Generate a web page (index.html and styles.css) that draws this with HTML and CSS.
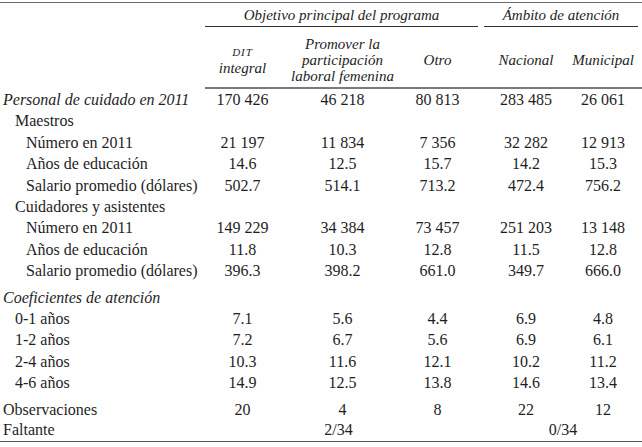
FILE: index.html
```html
<!DOCTYPE html>
<html>
<head>
<meta charset="utf-8">
<link rel="stylesheet" href="styles.css">
</head>
<body>
<table class="tbl">
  <colgroup>
    <col class="c-label"><col class="c-dit"><col class="c-prom"><col class="c-otro"><col class="c-nac"><col class="c-mun">
  </colgroup>
  <thead>
    <tr class="h1">
      <th rowspan="2"></th>
      <th colspan="3"><div class="grp grp-obj">Objetivo principal del programa</div></th>
      <th colspan="2"><div class="grp grp-amb">Ámbito de atención</div></th>
    </tr>
    <tr class="h2">
      <th class="n dit"><span class="sc">DIT</span><br>integral</th>
      <th class="n prom">Promover la<br>participación<br>laboral femenina</th>
      <th class="n otro">Otro</th>
      <th class="n nac">Nacional</th>
      <th class="n mun">Municipal</th>
    </tr>
  </thead>
  <tbody>
    <tr><td class="l0 it">Personal de cuidado en 2011</td><td class="n dit">170 426</td><td class="n prom">46 218</td><td class="n otro">80 813</td><td class="n nac">283 485</td><td class="n mun">26 061</td></tr>
    <tr><td class="l1">Maestros</td><td></td><td></td><td></td><td></td><td></td></tr>
    <tr><td class="l2">Número en 2011</td><td class="n dit">21 197</td><td class="n prom">11 834</td><td class="n otro">7 356</td><td class="n nac">32 282</td><td class="n mun">12 913</td></tr>
    <tr><td class="l2">Años de educación</td><td class="n dit">14.6</td><td class="n prom">12.5</td><td class="n otro">15.7</td><td class="n nac">14.2</td><td class="n mun">15.3</td></tr>
    <tr><td class="l2">Salario promedio (dólares)</td><td class="n dit">502.7</td><td class="n prom">514.1</td><td class="n otro">713.2</td><td class="n nac">472.4</td><td class="n mun">756.2</td></tr>
    <tr><td class="l1">Cuidadores y asistentes</td><td></td><td></td><td></td><td></td><td></td></tr>
    <tr><td class="l2">Número en 2011</td><td class="n dit">149 229</td><td class="n prom">34 384</td><td class="n otro">73 457</td><td class="n nac">251 203</td><td class="n mun">13 148</td></tr>
    <tr><td class="l2">Años de educación</td><td class="n dit">11.8</td><td class="n prom">10.3</td><td class="n otro">12.8</td><td class="n nac">11.5</td><td class="n mun">12.8</td></tr>
    <tr><td class="l2">Salario promedio (dólares)</td><td class="n dit">396.3</td><td class="n prom">398.2</td><td class="n otro">661.0</td><td class="n nac">349.7</td><td class="n mun">666.0</td></tr>
    <tr class="gap"><td class="l0 it">Coeficientes de atención</td><td></td><td></td><td></td><td></td><td></td></tr>
    <tr><td class="l1">0-1 años</td><td class="n dit">7.1</td><td class="n prom">5.6</td><td class="n otro">4.4</td><td class="n nac">6.9</td><td class="n mun">4.8</td></tr>
    <tr><td class="l1">1-2 años</td><td class="n dit">7.2</td><td class="n prom">6.7</td><td class="n otro">5.6</td><td class="n nac">6.9</td><td class="n mun">6.1</td></tr>
    <tr><td class="l1">2-4 años</td><td class="n dit">10.3</td><td class="n prom">11.6</td><td class="n otro">12.1</td><td class="n nac">10.2</td><td class="n mun">11.2</td></tr>
    <tr><td class="l1">4-6 años</td><td class="n dit">14.9</td><td class="n prom">12.5</td><td class="n otro">13.8</td><td class="n nac">14.6</td><td class="n mun">13.4</td></tr>
    <tr class="gap"><td class="l0">Observaciones</td><td class="n dit">20</td><td class="n prom">4</td><td class="n otro">8</td><td class="n nac">22</td><td class="n mun">12</td></tr>
    <tr class="last"><td class="l0">Faltante</td><td colspan="3" class="n span-obj">2/34</td><td colspan="2" class="n span-amb">0/34</td></tr>
  </tbody>
</table>
</body>
</html>
```

FILE: styles.css
```css
html, body {
  margin: 0;
  padding: 0;
  background: #ffffff;
}

body {
  font-family: "Liberation Serif", "Times New Roman", serif;
  color: #1e1e1e;
  font-size: 16px;
}

.tbl {
  width: 642px;
  table-layout: fixed;
  border-collapse: collapse;
  margin-top: 2px;
  border-top: 1px solid #6a6a6a;
  font-family: "Liberation Serif", "Times New Roman", serif;
  font-size: 16px;
}

.c-label { width: 205px; }
.c-dit { width: 75px; }
.c-prom { width: 125px; }
.c-otro { width: 73px; }
.c-nac { width: 92px; }
.c-mun { width: 72px; }

th {
  font-weight: normal;
  font-style: italic;
  padding: 0;
  vertical-align: middle;
}

td {
  padding: 0;
  line-height: 21.4px;
  white-space: nowrap;
}

.h1 th {
  height: 22px;
  vertical-align: top;
  padding-top: 3px;
  font-size: 15px;
}

.grp {
  border-bottom: 1.5px solid #333;
  text-align: center;
  line-height: 18px;
  padding-bottom: 2px;
}

.grp-obj {
  padding-right: 10px;
  padding-left: 10px;
}

.grp-amb {
  margin: 0 4px 0 6px;
}

.h2 th {
  height: 55px;
  line-height: 16px;
  font-size: 15px;
  border-bottom: 2px solid #7a7a7a;
  padding-top: 4px;
  padding-bottom: 0;
}

.sc {
  font-size: 11px;
  letter-spacing: 1px;
}

.n { text-align: center; }
.otro { padding-right: 8px; }
.nac { padding-left: 4px; }
.mun { padding-right: 6px; }

.l0 { padding-left: 3px; }
.l1 { padding-left: 15px; }
.l2 { padding-left: 26px; }

.it { font-style: italic; }

.gap td { padding-top: 5px; }

.last td {
  line-height: 20px;
  border-bottom: 1px solid #555;
  padding-bottom: 1px;
}

.span-obj { padding-right: 6px; }
.span-amb { padding-left: 6px; }
```
